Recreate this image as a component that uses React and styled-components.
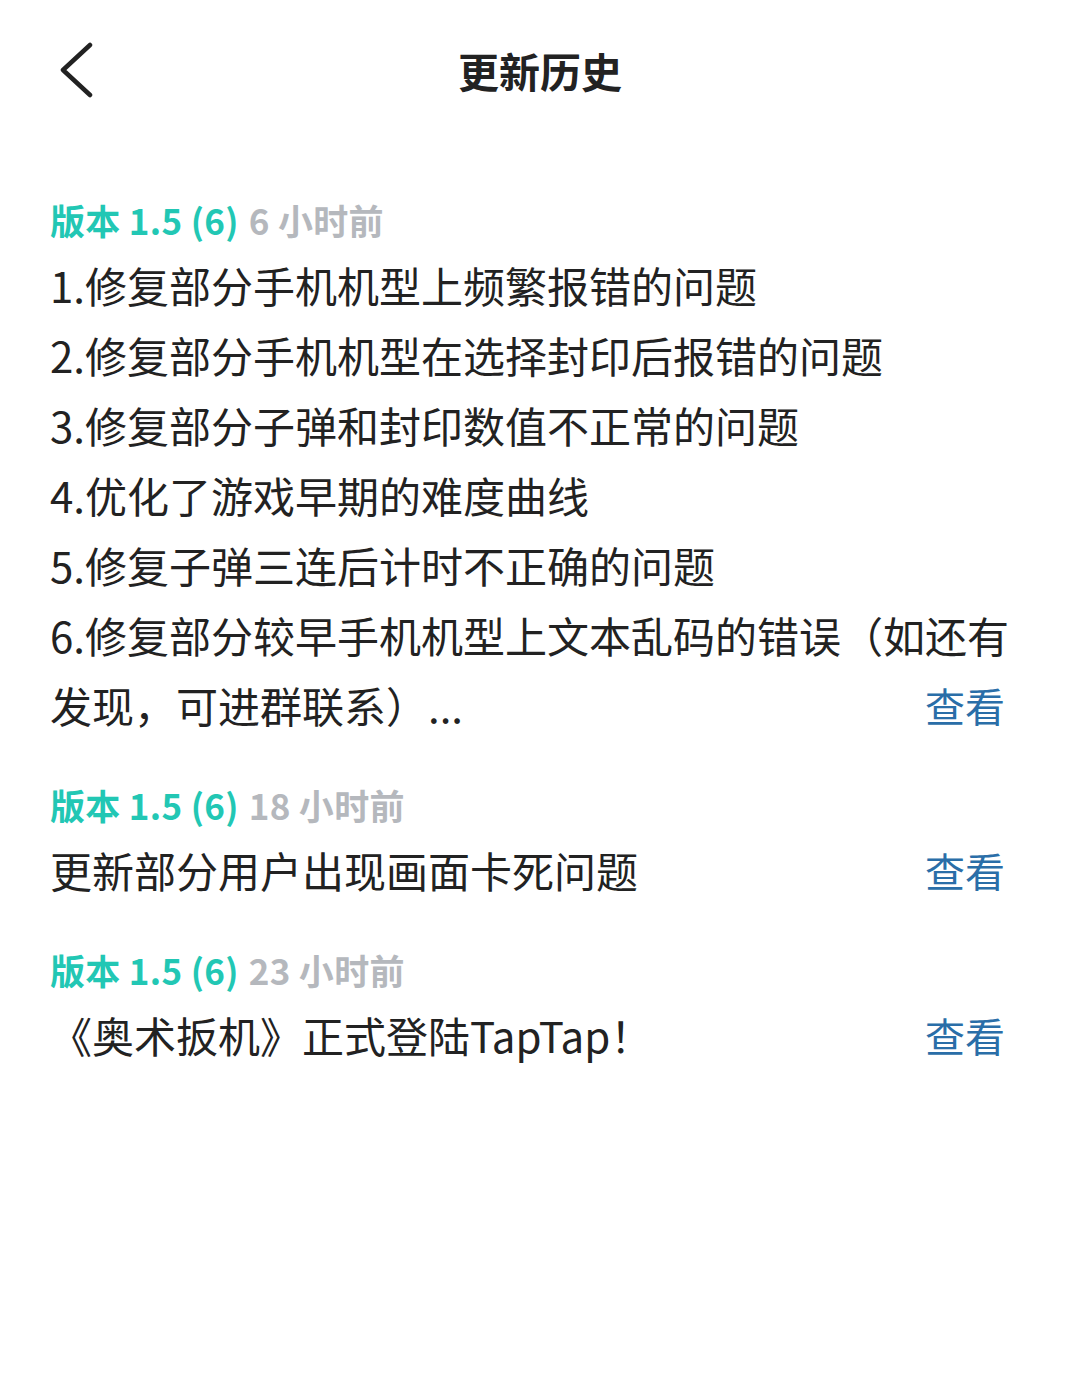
import styled, { createGlobalStyle } from "styled-components";

const GlobalStyle = createGlobalStyle`
  body {
    margin: 0;
    background: #fff;
    font-family: "Noto Sans CJK SC", "Noto Sans", sans-serif;
    color: #222;
  }
`;

const Page = styled.div`
  width: 1080px;
  min-height: 1383px;
  background: #fff;
`;

const NavBar = styled.header`
  height: 144px;
  padding-bottom: 4px;
  box-sizing: border-box;
  display: grid;
  grid-template-columns: 160px 1fr 160px;
  align-items: center;
`;

const BackButton = styled.button`
  border: none;
  background: none;
  padding: 0 0 0 58px;
  height: 60px;
  display: flex;
  align-items: center;
  cursor: pointer;
`;

const Title = styled.h1`
  margin: 0;
  text-align: center;
  font-size: 41px;
  font-weight: 700;
  color: #222;
`;

const List = styled.main`
  padding: 51px 75px 0 50px;
  display: flex;
  flex-direction: column;
  gap: 40px;
`;

const Entry = styled.section`
  display: flex;
  flex-direction: column;
  gap: 5px;
`;

const EntryHead = styled.div`
  font-size: 35px;
  font-weight: 700;
  line-height: 50px;
  color: #b5b8bd;
  letter-spacing: 0.3px;
`;

const Version = styled.span`
  color: #22c7b4;
  margin-right: 10px;
`;

const Line = styled.div`
  font-size: 42px;
  line-height: 70px;
  color: #222;
  white-space: nowrap;
`;

const LastRow = styled.div`
  display: flex;
  justify-content: space-between;
  align-items: center;
`;

const ViewLink = styled.a`
  font-size: 40px;
  line-height: 70px;
  color: #2a6ea8;
  text-decoration: none;
`;

const entries = [
  {
    age: "6 小时前",
    lines: [
      "1.修复部分手机机型上频繁报错的问题",
      "2.修复部分手机机型在选择封印后报错的问题",
      "3.修复部分子弹和封印数值不正常的问题",
      "4.优化了游戏早期的难度曲线",
      "5.修复子弹三连后计时不正确的问题",
      "6.修复部分较早手机机型上文本乱码的错误（如还有",
      "发现，可进群联系）...",
    ],
  },
  { age: "18 小时前", lines: ["更新部分用户出现画面卡死问题"] },
  { age: "23 小时前", lines: ["《奥术扳机》正式登陆TapTap！"] },
];

const ChevronLeft = () => (
  <svg width="36" height="56" viewBox="0 0 36 56" fill="none">
    <path
      d="M32 3 L5 28 L32 53"
      stroke="#222"
      strokeWidth="4.5"
      strokeLinecap="round"
      strokeLinejoin="round"
    />
  </svg>
);

const App = () => {
  return (
    <Page>
      <GlobalStyle />
      <NavBar>
        <BackButton aria-label="返回">
          <ChevronLeft />
        </BackButton>
        <Title>更新历史</Title>
        <span />
      </NavBar>
      <List>
        {entries.map((entry) => {
          const head = entry.lines.slice(0, -1);
          const last = entry.lines[entry.lines.length - 1];
          return (
            <Entry key={entry.age}>
              <EntryHead>
                <Version>版本 1.5 (6)</Version>
                {entry.age}
              </EntryHead>
              <div>
                {head.map((line) => (
                  <Line key={line}>{line}</Line>
                ))}
                <LastRow>
                  <Line>{last}</Line>
                  <ViewLink href="#">查看</ViewLink>
                </LastRow>
              </div>
            </Entry>
          );
        })}
      </List>
    </Page>
  );
};

export default App;
